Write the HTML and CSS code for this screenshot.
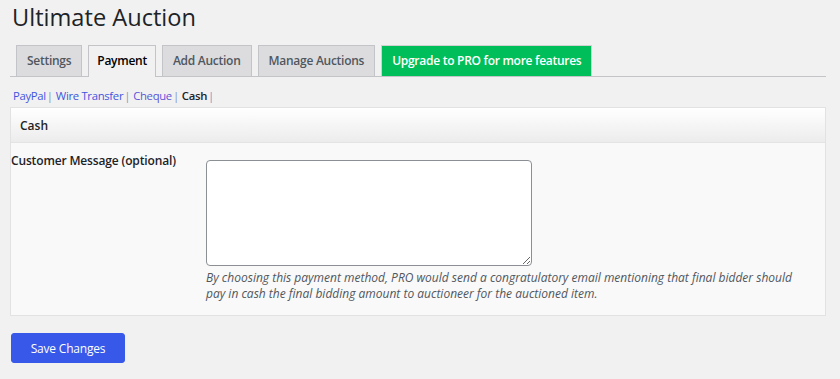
FILE: index.html
```html
<!DOCTYPE html>
<html lang="en">
<head>
<meta charset="utf-8">
<title>Ultimate Auction</title>
<link rel="stylesheet" href="styles.css">
</head>
<body>
<div class="wrap">
  <h1 class="title">Ultimate Auction</h1>
  <nav class="tabs">
    <a class="tab">Settings</a>
    <a class="tab active">Payment</a>
    <a class="tab">Add Auction</a>
    <a class="tab">Manage Auctions</a>
    <a class="tab pro">Upgrade to PRO for more features</a>
  </nav>
  <ul class="subsub">
    <li><a class="link">PayPal</a><span class="sep">|</span></li>
    <li><a class="link">Wire Transfer</a><span class="sep">|</span></li>
    <li><a class="link visited">Cheque</a><span class="sep">|</span></li>
    <li><span class="current">Cash</span><span class="sep">|</span></li>
  </ul>
  <section class="panel">
    <div class="panel-head">Cash</div>
    <div class="panel-body">
      <label class="field-label" for="msg">Customer Message (optional)</label>
      <div class="field">
        <textarea id="msg" class="message"></textarea>
        <p class="help">By choosing this payment method, PRO would send a congratulatory email mentioning that final bidder should pay in cash the final bidding amount to auctioneer for the auctioned item.</p>
      </div>
    </div>
  </section>
  <button class="save">Save Changes</button>
</div>
</body>
</html>
```
FILE: styles.css
```css
* { box-sizing: border-box; }
html, body { margin: 0; padding: 0; }
body {
  background: #f1f1f1;
  font-family: "Open Sans", "Noto Sans", sans-serif;
  color: #1d2327;
  width: 840px;
  height: 379px;
  overflow: hidden;
}
.wrap {
  padding: 0 14px 0 10px;
}
.title {
  margin: 0;
  padding: 1px 0 0 2px;
  font-size: 23.6px;
  font-weight: 400;
  line-height: 32px;
  color: #1d2327;
}
.tabs {
  display: flex;
  gap: 6px;
  margin-top: 12px;
  padding-left: 6px;
  border-bottom: 1px solid #c3c4c7;
  height: 32px;
}
.tab {
  display: block;
  height: 31px;
  padding: 0 10px;
  font-size: 12px;
  letter-spacing: -0.27px;
  font-weight: 600;
  line-height: 30px;
  color: #50575e;
  background: #dcdcde;
  border: 1px solid #c3c4c7;
  border-bottom: none;
}
.tab.active {
  padding: 0 8px;
  background: #f1f1f1;
  color: #000;
  height: 32px;
}
.tab.pro {
  background: #00bf5a;
  color: #fff;
  border-color: #cfd3d0;
}
.subsub {
  list-style: none;
  margin: 9px 0 0 3px;
  padding: 0;
  display: flex;
  font-size: 11.3px;
  letter-spacing: -0.3px;
  line-height: 19px;
}
.subsub li { display: flex; }
.link { color: #3f55e0; }
.link.visited { color: #5a55d8; }
.sep { color: #8a94c4; margin: 0 3px 0 1px; }
.current { color: #1d2327; font-weight: 600; }
.panel {
  margin-top: 2px;
  border: 1px solid #e2e2e2;
  background: #f9f9f9;
}
.panel-head {
  height: 35px;
  padding: 0 9px;
  font-size: 12px;
  font-weight: 600;
  line-height: 35px;
  color: #1d2327;
  background: linear-gradient(#ffffff, #ececec);
  border-bottom: 1px solid #e4e4e4;
}
.panel-body {
  display: grid;
  grid-template-columns: 195px 1fr;
  padding: 0 0 13px 0;
}
.field-label {
  padding-top: 9px;
  font-size: 12px;
  letter-spacing: -0.15px;
  font-weight: 600;
  line-height: 18px;
  color: #1d2327;
}
.field { padding-top: 17px; padding-right: 20px; }
.message {
  display: block;
  width: 326px;
  height: 106px;
  margin: 0;
  background: #fff;
  border: 1px solid #8c8f94;
  border-radius: 4px;
  resize: vertical;
}
.help {
  margin: 4px 0 0 0;
  font-size: 12px;
  font-style: italic;
  line-height: 16px;
  color: #50575e;
}
.save {
  display: block;
  margin: 17px 0 0 1px;
  width: 114px;
  height: 30px;
  padding: 0;
  background: #3858e9;
  color: #fff;
  border: 1px solid #3858e9;
  border-radius: 3px;
  font-family: "Open Sans", "Noto Sans", sans-serif;
  font-size: 12px;
  letter-spacing: -0.2px;
}
```
